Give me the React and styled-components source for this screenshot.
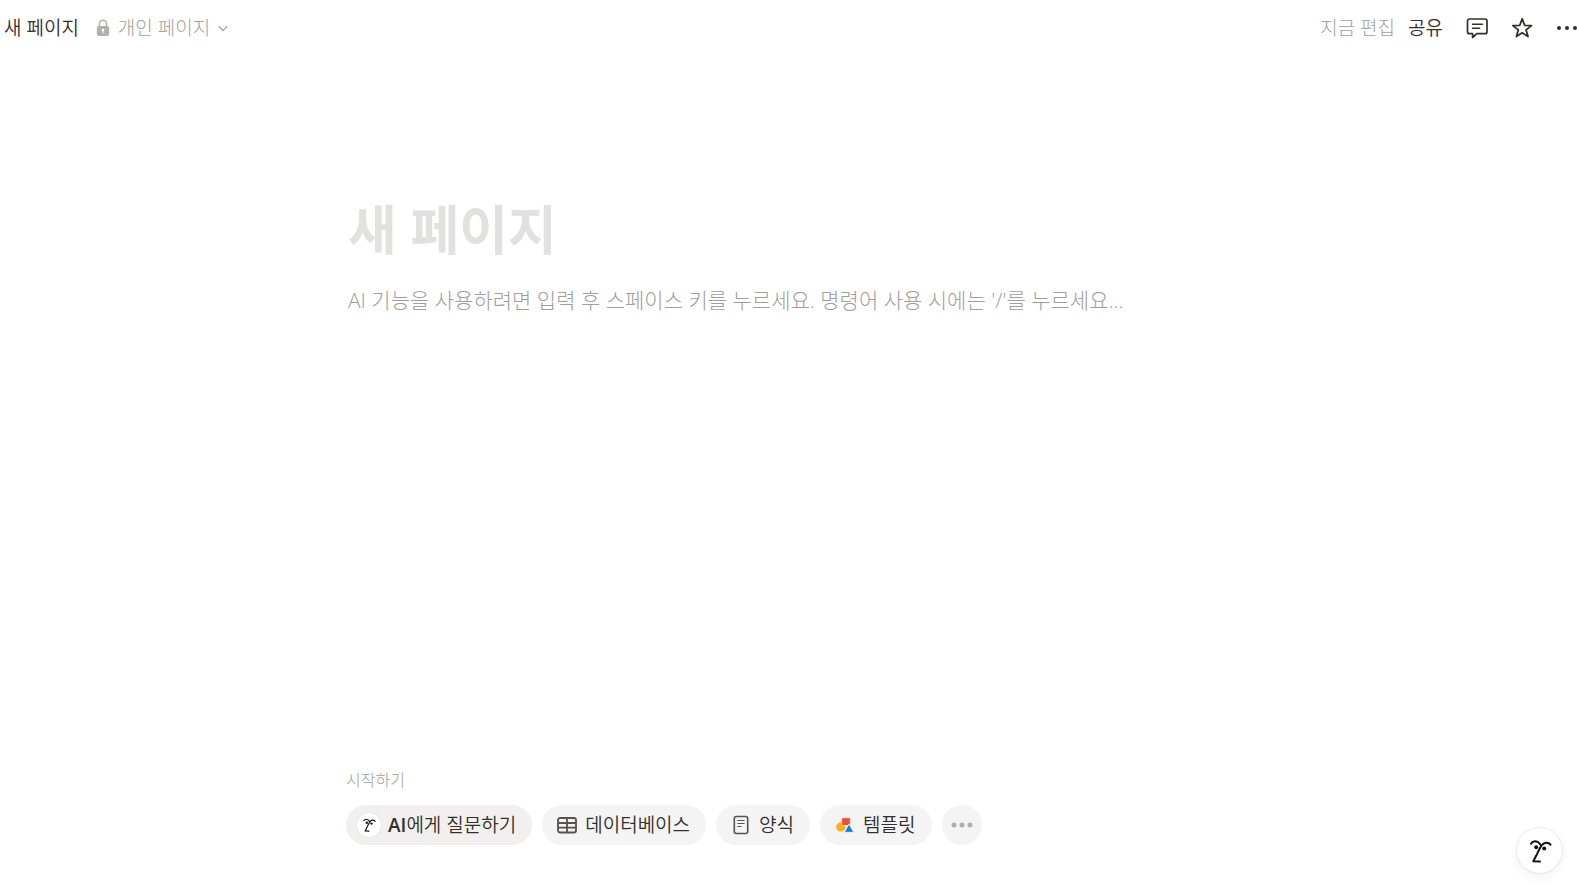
import styled, { createGlobalStyle } from 'styled-components';

const GlobalStyle = createGlobalStyle`
	* {
		box-sizing: border-box;
	}

	body {
		margin: 0;
		background: #fff;
		color: #32302c;
		font-family: "Open Sans", "Noto Sans CJK KR", sans-serif;
	}

	button,
	input {
		font-family: inherit;
		color: inherit;
		border: none;
		background: transparent;
		padding: 0;
		margin: 0;
	}

	button {
		cursor: pointer;
	}

	svg {
		display: block;
		flex-shrink: 0;
	}
`;

const Page = styled.div`
	min-height: 100vh;
	display: flex;
	flex-direction: column;
	overflow: hidden;
`;

const TopBar = styled.header`
	height: 55px;
	display: flex;
	justify-content: space-between;
	align-items: center;
	padding-left: 4px;
`;

const BarGroup = styled.div`
	display: flex;
	align-items: center;
	gap: ${(props) => props.$gap}px;
`;

const BarButton = styled.button`
	display: flex;
	align-items: center;
	gap: 8px;
	height: 35px;
	font-size: 19px;
	line-height: 24px;
	font-weight: ${(props) => (props.$muted ? 300 : 350)};
	color: ${(props) => (props.$muted ? '#a3a19d' : '#32302c')};
	white-space: nowrap;
`;

const Edited = styled.span`
	font-size: 19px;
	line-height: 24px;
	font-weight: 300;
	color: #a3a19d;
`;

const IconButton = styled.button`
	display: flex;
	align-items: center;
	justify-content: center;
	width: 45px;
	height: 35px;
`;

const IconGroup = styled.div`
	display: flex;
	margin-left: -2px;
	margin-right: -12px;
`;

const Main = styled.main`
	flex-grow: 1;
	display: flex;
	flex-direction: column;
	width: 100%;
	max-width: 885px;
	margin: 0 auto;
	padding: 141px 0 41px;
`;

const TitleInput = styled.input`
	width: 100%;
	height: 66px;
	padding: 0 2px;
	font-size: 53px;
	font-weight: 700;
	outline: none;

	&::placeholder {
		color: #e1e1e0;
		opacity: 1;
	}
`;

const BodyInput = styled.input`
	width: 100%;
	height: 32px;
	margin-top: 22px;
	padding: 0 2px;
	font-size: 21px;
	font-weight: 300;
	outline: none;

	&::placeholder {
		color: #a09e9a;
		opacity: 1;
	}
`;

const Starter = styled.section`
	margin-top: auto;
`;

const StarterLabel = styled.h2`
	margin: 0 0 13px;
	font-size: 16px;
	line-height: 24px;
	font-weight: 300;
	color: #a09e9a;
`;

const PillRow = styled.div`
	display: flex;
	flex-wrap: wrap;
	gap: 10px;
`;

const Pill = styled.button`
	display: flex;
	align-items: center;
	justify-content: center;
	gap: 7px;
	height: 40px;
	min-width: 40px;
	padding: ${(props) => (props.$iconOnly ? '0' : '0 16px 0 14px')};
	border-radius: 20px;
	background: ${(props) => (props.$active ? '#f1f0ef' : '#f4f4f4')};
	font-size: 19px;
	line-height: 24px;
	font-weight: 350;
	white-space: nowrap;

	b {
		font-weight: 600;
	}
`;

const FaceBadge = styled.span`
	display: flex;
	align-items: center;
	justify-content: center;
	width: 24px;
	height: 24px;
	margin-left: -3px;
	border-radius: 50%;
	background: #fff;
	box-shadow: 0 0 1px rgba(0, 0, 0, 0.2);
`;

const FloatingButton = styled.button`
	position: fixed;
	right: 15px;
	bottom: 13px;
	display: flex;
	align-items: center;
	justify-content: center;
	width: 45px;
	height: 45px;
	border-radius: 50%;
	background: #fff;
	box-shadow: 0 0 1px 1px rgba(0, 0, 0, 0.07), 0 4px 12px rgba(0, 0, 0, 0.06);
`;

const LockIcon = () => (
	<svg width="14" height="18" viewBox="0 0 14 18" fill="none">
		<path d="M3.4 8V4.9a3.6 3.6 0 0 1 7.2 0v3" stroke="#b3b1ae" strokeWidth="1.6" />
		<rect x=".8" y="7" width="12.4" height="10" rx="2" fill="#b3b1ae" />
		<path d="M7 13.6v-2.4" stroke="#fff" strokeWidth="1.2" strokeLinecap="round" />
		<circle cx="7" cy="11" r="1.3" fill="#fff" />
	</svg>
);

const ChevronIcon = () => (
	<svg width="10" height="10" viewBox="0 0 10 10" fill="none">
		<path d="M1 3.5l4 4 4-4" stroke="#a8a6a2" strokeWidth="1.2" strokeLinecap="round" strokeLinejoin="round" />
	</svg>
);

const CommentIcon = () => (
	<svg width="24" height="24" viewBox="0 0 24 24" fill="none" stroke="#32302c" strokeWidth="1.7" strokeLinejoin="round" strokeLinecap="round">
		<path d="M4.5 3H20a2 2 0 0 1 2 2v10.7a2 2 0 0 1-2 2h-8.2l-4.2 3.8v-3.8H4.500a2 2 0 0 1-2-2V5a2 2 0 0 1 2-2z" />
		<path d="M7.600 8.300h9.800M7.600 12.300h7" strokeWidth="1.6" />
	</svg>
);

const StarIcon = () => (
	<svg width="24" height="24" viewBox="0 0 24 24" fill="none" stroke="#32302c" strokeWidth="1.8" strokeLinejoin="round">
		<path d="M12.2 2.8l2.4 6.500 6.900.3-5.400 4.300 1.900 6.700-5.800-3.800-5.800 3.800 1.900-6.700-5.400-4.300 6.900-.3z" />
	</svg>
);

const DotsIcon = ({ color, r, step }) => (
	<svg width="24" height="24" viewBox="0 0 24 24" fill={color}>
		<circle cx={12 - step} cy="12" r={r} />
		<circle cx="12" cy="12" r={r} />
		<circle cx={12 + step} cy="12" r={r} />
	</svg>
);

const FaceIcon = ({ size }) => (
	<svg width={size} height={size} viewBox="0 0 24 24" fill="none" stroke="#111" strokeWidth="2" strokeLinecap="round" strokeLinejoin="round">
		<path d="M3 4.7c2-3.2 6.200-3.500 8.600-.2l1.400 1.900" />
		<path d="M22.500 5.700c-2.300-3-6.600-2.600-9 .8-1.500 2.300-3.300 6-4.300 8.200L5.300 22.300l6.600.3" />
		<circle cx="8.200" cy="8.200" r="2" fill="#111" stroke="none" />
		<circle cx="16.200" cy="9.600" r="2" fill="#111" stroke="none" />
	</svg>
);

const TableIcon = () => (
	<svg width="22" height="20" viewBox="0 0 22 20" fill="none" stroke="#55534e" strokeWidth="1.8">
		<rect x="2" y="3" width="18" height="14.5" rx="2" />
		<path d="M2 8h18M2 12.7h18M11 3v14.5" />
	</svg>
);

const FormIcon = () => (
	<svg width="22" height="20" viewBox="0 0 22 20" fill="none" stroke="#55534e" strokeWidth="1.6" strokeLinecap="round">
		<rect x="4.3" y="1.5" width="13.4" height="17" rx="2" />
		<path d="M7.8 5.5h6.4M7.8 8.500h6.400M7.800 11.500h3.200" strokeWidth="1.2" />
	</svg>
);

const TemplateIcon = () => (
	<svg width="22" height="20" viewBox="0 0 22 20">
		<circle cx="6.800" cy="12" r="4.700" fill="#ffb110" />
		<path d="M8.600 2.700h6.800a.9.900 0 0 1 .9.900v6a.9.900 0 0 1-.9.900H8.600a.9.900 0 0 1-.9-.9v-6a.9.900 0 0 1 .9-.9z" fill="#f64932" stroke="#f4f4f4" strokeWidth=".8" />
		<path d="M15 8.900l4.700 8.400H10.300z" fill="#097fe8" stroke="#f4f4f4" strokeWidth=".8" strokeLinejoin="round" />
	</svg>
);

const App = () => {
	return (
		<>
			<GlobalStyle />
			<Page>
				<TopBar>
					<BarGroup $gap={17}>
						<BarButton>새 페이지</BarButton>
						<BarButton $muted>
							<LockIcon />
							개인 페이지
							<ChevronIcon />
						</BarButton>
					</BarGroup>
					<BarGroup $gap={13}>
						<Edited>지금 편집</Edited>
						<BarButton>공유</BarButton>
						<IconGroup>
							<IconButton aria-label="댓글">
								<CommentIcon />
							</IconButton>
							<IconButton aria-label="즐겨찾기">
								<StarIcon />
							</IconButton>
							<IconButton aria-label="더 보기">
								<DotsIcon color="#32302c" r={2} step={8} />
							</IconButton>
						</IconGroup>
					</BarGroup>
				</TopBar>
				<Main>
					<TitleInput aria-label="제목" placeholder="새 페이지" />
					<BodyInput
						aria-label="본문"
						placeholder="AI 기능을 사용하려면 입력 후 스페이스 키를 누르세요. 명령어 사용 시에는 '/'를 누르세요..."
					/>
					<Starter>
						<StarterLabel>시작하기</StarterLabel>
						<PillRow>
							<Pill $active>
								<FaceBadge>
									<FaceIcon size={14} />
								</FaceBadge>
								<span>
									<b>AI</b>에게 질문하기
								</span>
							</Pill>
							<Pill>
								<TableIcon />
								데이터베이스
							</Pill>
							<Pill>
								<FormIcon />
								양식
							</Pill>
							<Pill>
								<TemplateIcon />
								템플릿
							</Pill>
							<Pill $iconOnly aria-label="더 보기">
								<DotsIcon color="#b1b0ae" r={2.5} step={8} />
							</Pill>
						</PillRow>
					</Starter>
				</Main>
			</Page>
			<FloatingButton aria-label="AI">
				<FaceIcon size={24} />
			</FloatingButton>
		</>
	);
};

export default App;
